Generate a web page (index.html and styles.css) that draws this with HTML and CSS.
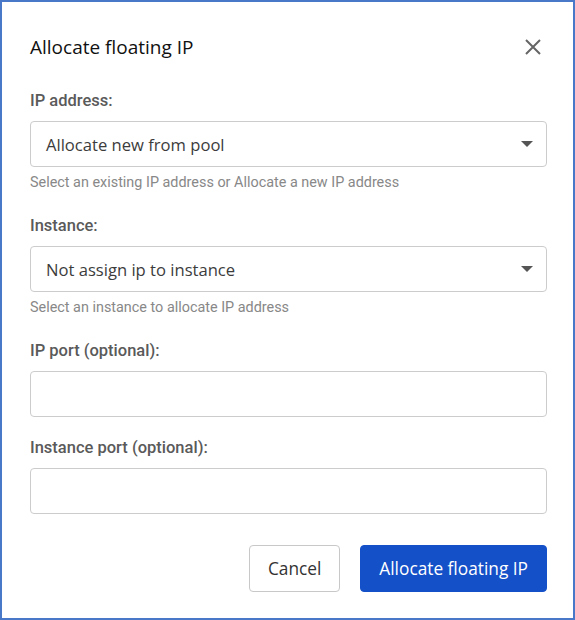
FILE: index.html
```html
<!DOCTYPE html>
<html>
<head>
<meta charset="utf-8">
<link rel="stylesheet" href="styles.css">
</head>
<body>
<div class="dialog">
  <div class="header">
    <h1 class="title">Allocate floating IP</h1>
    <button class="close" aria-label="Close">
      <svg width="18" height="18" viewBox="0 0 18 18"><path d="M2 2 L16 16 M16 2 L2 16" stroke="#666" stroke-width="2" fill="none"/></svg>
    </button>
  </div>
  <div class="field">
    <div class="label">IP address:</div>
    <div class="select"><span>Allocate new from pool</span><span class="caret"></span></div>
    <div class="help">Select an existing IP address or Allocate a new IP address</div>
  </div>
  <div class="field">
    <div class="label">Instance:</div>
    <div class="select"><span>Not assign ip to instance</span><span class="caret"></span></div>
    <div class="help">Select an instance to allocate IP address</div>
  </div>
  <div class="field">
    <div class="label">IP port (optional):</div>
    <div class="input"></div>
  </div>
  <div class="field">
    <div class="label">Instance port (optional):</div>
    <div class="input"></div>
  </div>
  <div class="footer">
    <button class="btn btn-cancel">Cancel</button>
    <button class="btn btn-primary">Allocate floating IP</button>
  </div>
</div>
</body>
</html>
```
FILE: styles.css
```css
html, body {
  margin: 0;
  padding: 0;
  background: #ffffff;
}
.dialog {
  box-sizing: border-box;
  width: 575px;
  height: 620px;
  border: 2px solid #4a78c8;
  padding: 0 26px 0 28px;
  background: #fff;
  font-family: Roboto, "Liberation Sans", sans-serif;
}
.header {
  display: flex;
  align-items: center;
  justify-content: space-between;
  margin-top: 31px;
  height: 28px;
}
.title {
  margin: 0;
  font-family: "Open Sans", sans-serif;
  font-weight: 400;
  font-size: 19px;
  line-height: 28px;
  color: #111;
}
.close {
  border: 0;
  background: none;
  padding: 0;
  margin-right: 5px;
  width: 18px;
  height: 18px;
  display: flex;
}
.header + .field {
  margin-top: 30px;
}
.field + .field {
  margin-top: 21px;
}
.label {
  font-size: 16.5px;
  font-weight: 500;
  line-height: 20px;
  color: #5a5a5a;
  margin-bottom: 10px;
}
.select, .input {
  box-sizing: border-box;
  height: 46px;
  border: 1px solid #cccccc;
  border-radius: 4px;
  display: flex;
  align-items: center;
  justify-content: space-between;
  padding: 0 13px 0 15px;
  font-family: "Open Sans", sans-serif;
  font-size: 16.6px;
  color: #3c3c3c;
}
.caret {
  width: 0;
  height: 0;
  border-left: 6px solid transparent;
  border-right: 6px solid transparent;
  border-top: 6px solid #555;
}
.help {
  padding-top: 7px;
  padding-bottom: 3px;
  font-size: 14.4px;
  line-height: 18px;
  color: #888;
}
.footer {
  display: flex;
  justify-content: flex-end;
  gap: 20px;
  margin-top: 31px;
}
.btn {
  box-sizing: border-box;
  height: 47px;
  border-radius: 4px;
  font-family: "Open Sans", sans-serif;
  font-size: 17.3px;
  padding: 0 18px;
  cursor: pointer;
}
.btn-cancel {
  background: #fff;
  border: 1px solid #c8c8c8;
  color: #333;
}
.btn-primary {
  background: #1450c8;
  border: 1px solid #1450c8;
  color: #fff;
}
```
